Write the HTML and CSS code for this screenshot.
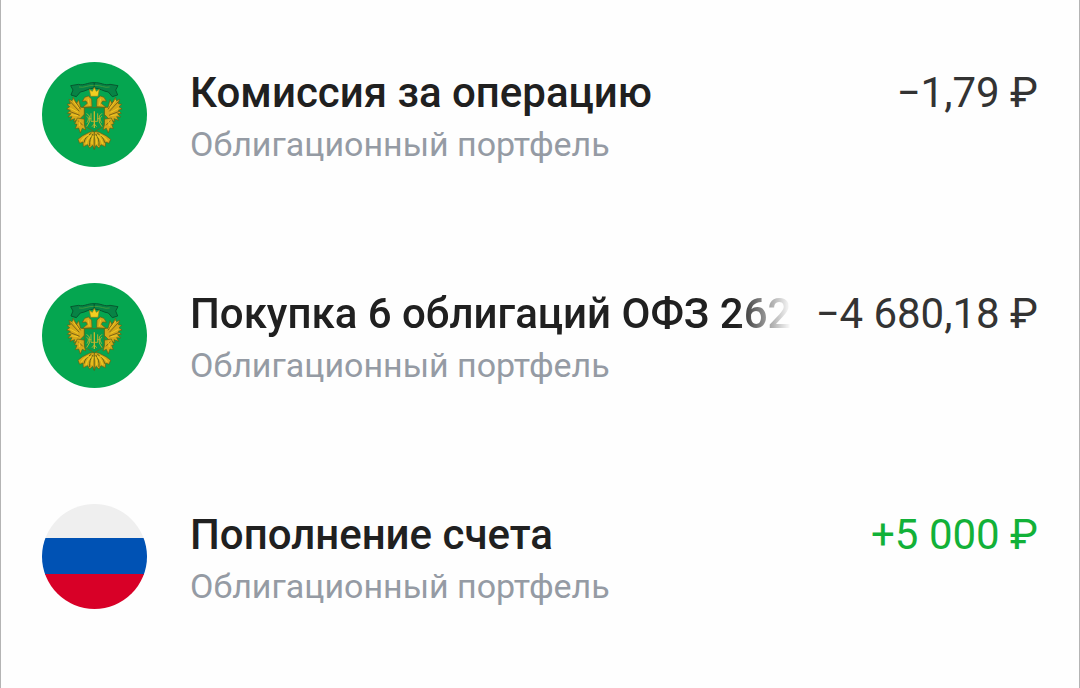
FILE: index.html
```html
<!DOCTYPE html>
<html lang="ru">
<head>
<meta charset="utf-8">
<meta name="viewport" content="width=device-width, initial-scale=1">
<title>Операции</title>
<link rel="stylesheet" href="styles.css">
</head>
<body>
<svg class="defs" aria-hidden="true">
  <g id="eagle-half" stroke-linejoin="round">
    <path d="M193 98C172 97 162 108 146 103L122 107L129 120L123 135L139 140L151 126C166 124 176 115 193 114Z" fill="#078345" stroke="#06582f" stroke-width="3"/>
    <path d="M193 106C174 105 162 115 147 111" fill="none" stroke="#3f9a3a" stroke-width="3"/>
    <g fill="#d6a81a" stroke="#5d5f14" stroke-width="2">
      <path d="M152 172L146 149L140 160L129 142L128 153L117 148L121 161L111 163L119 170L110 177L121 181L112 190L123 191L114 201L126 200L120 211L134 206L131 215L150 206L164 192V172Z"/>
      <path d="M186 170L185 147L175 138L164 142L157 154L168 153L172 160L158 172Z"/>
      <path d="M142 204L134 222L141 223L136 236L146 234L151 249L157 235L167 240L163 226L165 208Z"/>
      <path d="M193 244L178 247L158 257L144 268L149 280L159 276L160 290L173 284L179 294L188 286L193 298Z"/>
    </g>
    <path d="M120 154L148 184M118 184L149 196M134 152L152 178M145 212L158 226" fill="none" stroke="#7c6414" stroke-width="3"/>
    <path d="M128 150L146 174M121 175L144 187M124 194L144 197M174 146L178 166M150 212L148 228" fill="none" stroke="#f0c822" stroke-width="3"/>
    <path d="M184 250C172 256 164 266 162 278M189 252C181 262 178 272 179 288" fill="none" stroke="#5b6513" stroke-width="3"/>
    <path d="M177 254C166 259 158 266 154 273M184 256C174 265 170 273 168 282M190 258C186 266 185 274 186 282" fill="none" stroke="#ecc722" stroke-width="4"/>
  </g>
  <g id="monogram-half" fill="none" stroke="#b5b12e" stroke-width="3">
    <path d="M170 190L178 198V216L170 230M170 199C176 202 177 208 171 218M183 190V214H193M176 206H184M186 230L193 222"/>
  </g>
  <symbol id="emblem" viewBox="0 0 105 105">
    <circle cx="52.5" cy="52.5" r="52.5" fill="#05a650"/>
    <g transform="translate(-12 -12) scale(.3333)">
      <use href="#eagle-half"/>
      <use href="#eagle-half" transform="translate(386 0) scale(-1 1)"/>
      <path d="M178 118L187 124L193 112L199 124L208 118L204 139H182Z" fill="#f3cf21" stroke="#8b7818" stroke-width="2"/>
      <path d="M163 173H223V218C223 234 205 236 193 246C181 236 163 234 163 218Z" fill="#059c4b" stroke="#5a701b" stroke-width="3"/>
      <use href="#monogram-half"/>
      <use href="#monogram-half" transform="translate(386 0) scale(-1 1)"/>
      <path d="M193 184V234" stroke="#c9b72c" stroke-width="4"/>
    </g>
  </symbol>
  <symbol id="flag" viewBox="0 0 105 105">
    <clipPath id="disc"><circle cx="52.5" cy="52.5" r="52.5"/></clipPath>
    <g clip-path="url(#disc)">
      <path fill="#efefef" d="M0 0h105v35H0z"/>
      <path fill="#0052b4" d="M0 34h105v37H0z"/>
      <path fill="#d80027" d="M0 70h105v35H0z"/>
    </g>
  </symbol>
</svg>
<main class="screen">
  <ul class="operations">
    <li class="operation">
      <svg class="logo" aria-hidden="true"><use href="#emblem"/></svg>
      <div class="details">
        <div class="headline"><span class="title">Комиссия за операцию</span><span class="amount">−1,79 ₽</span></div>
        <div class="account">Облигационный портфель</div>
      </div>
    </li>
    <li class="operation">
      <svg class="logo" aria-hidden="true"><use href="#emblem"/></svg>
      <div class="details">
        <div class="headline"><span class="title title-faded">Покупка 6 облигаций ОФЗ 262</span><span class="amount">−4 680,18 ₽</span></div>
        <div class="account">Облигационный портфель</div>
      </div>
    </li>
    <li class="operation">
      <svg class="logo" aria-hidden="true"><use href="#flag"/></svg>
      <div class="details">
        <div class="headline"><span class="title">Пополнение счета</span><span class="amount amount-income">+5 000 ₽</span></div>
        <div class="account">Облигационный портфель</div>
      </div>
    </li>
  </ul>
</main>
</body>
</html>
```
FILE: styles.css
```css
* { box-sizing: border-box; }
body {
  margin: 0;
  background: #fefefe;
  font-family: Roboto, "Liberation Sans", sans-serif;
}
.defs { position: absolute; width: 0; height: 0; }
.screen {
  min-height: 100vh;
  border: solid #b4b4b4;
  border-width: 0 1px;
}
.operations {
  list-style: none;
  margin: 0;
  padding: 62px 41px 0;
  display: flex;
  flex-direction: column;
  gap: 113px;
}
.operation { display: flex; gap: 43px; }
.logo { flex: none; width: 105px; height: 105px; }
.details { flex: 1; min-width: 0; padding-top: 6px; }
.headline { display: flex; justify-content: space-between; gap: 24px; }
.title, .amount { font-size: 42px; line-height: 50px; white-space: nowrap; }
.title {
  min-width: 0;
  overflow: hidden;
  font-weight: 500;
  color: #202020;
}
.title-faded {
  mask-image: linear-gradient(to right, #000 calc(100% - 54px), transparent);
}
.amount { flex: none; color: #333; }
.amount-income { color: #12b138; }
.account {
  font-size: 34px;
  line-height: 52px;
  color: #959ba4;
}
```
